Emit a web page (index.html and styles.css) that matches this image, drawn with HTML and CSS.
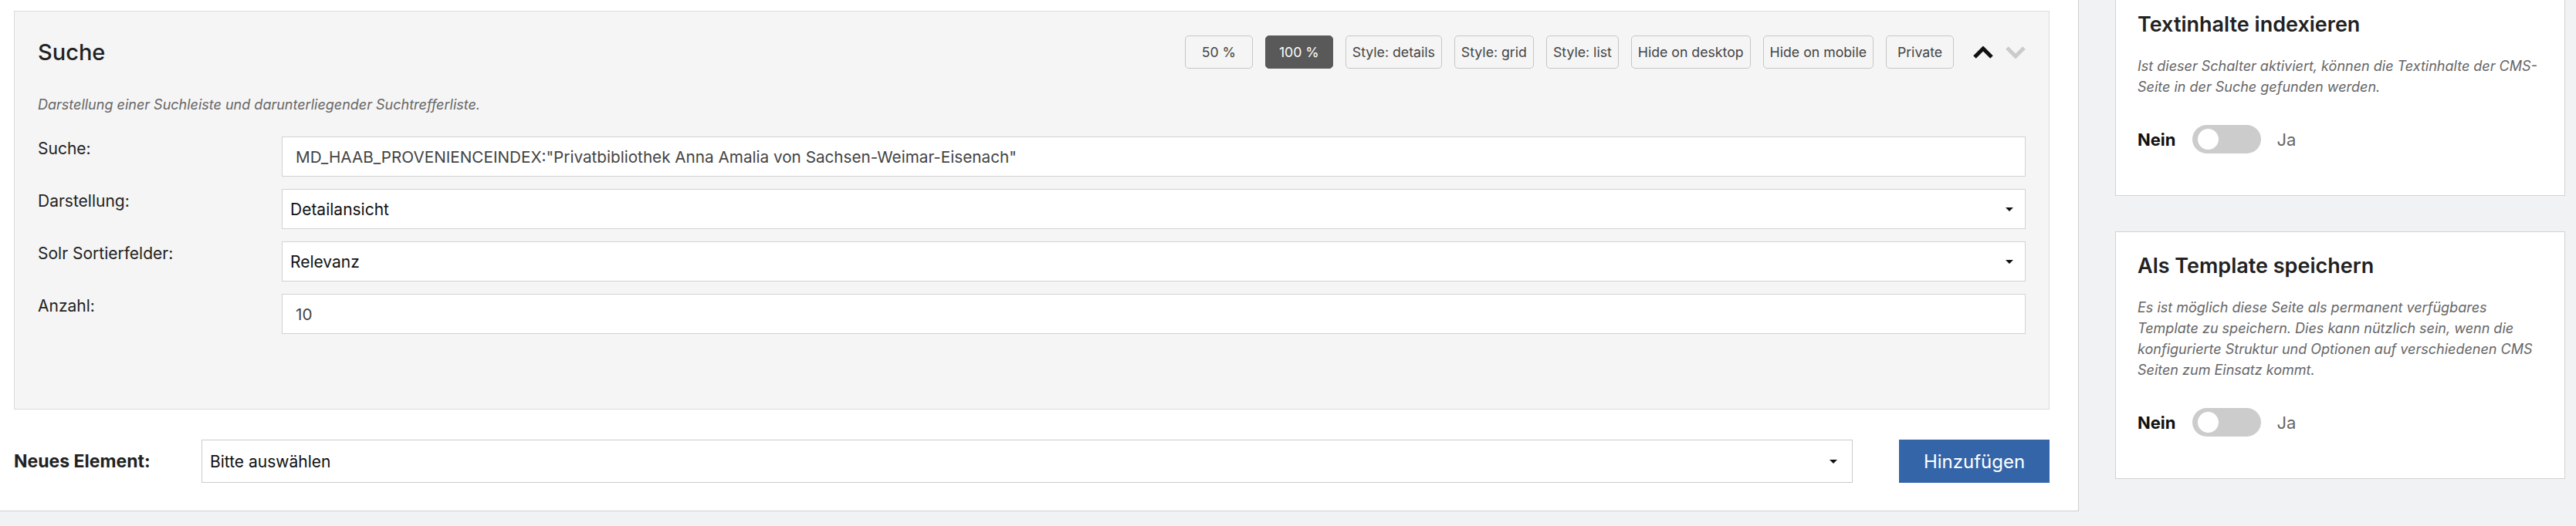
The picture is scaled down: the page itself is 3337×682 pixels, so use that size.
FILE: index.html
```html
<!DOCTYPE html>
<html lang="de">
<head>
    <meta charset="UTF-8">
    <title>CMS - Seite bearbeiten</title>
    <link rel="stylesheet" href="styles.css">
</head>
<body>
    <div class="page">
        <!-- Content editor -->
        <div class="editor">
            <div class="element">
                <div class="element-head">
                    <h2>Suche</h2>
                    <div class="element-tools">
                        <span class="tool">50 %</span>
                        <span class="tool active">100 %</span>
                        <span class="tool">Style: details</span>
                        <span class="tool">Style: grid</span>
                        <span class="tool">Style: list</span>
                        <span class="tool">Hide on desktop</span>
                        <span class="tool">Hide on mobile</span>
                        <span class="tool">Private</span>
                        <svg class="move up" viewBox="0 0 26 16"><polyline points="2,14 13,3 24,14"/></svg>
                        <svg class="move down" viewBox="0 0 26 16"><polyline points="2,2 13,13 24,2"/></svg>
                    </div>
                </div>
                <p class="element-desc">Darstellung einer Suchleiste und darunterliegender Suchtrefferliste.</p>

                <div class="element-form">
                    <label>Suche:</label>
                    <div class="field">MD_HAAB_PROVENIENCEINDEX:"Privatbibliothek Anna Amalia von Sachsen-Weimar-Eisenach"</div>

                    <label>Darstellung:</label>
                    <div class="field select">Detailansicht</div>

                    <label>Solr Sortierfelder:</label>
                    <div class="field select">Relevanz</div>

                    <label>Anzahl:</label>
                    <div class="field">10</div>
                </div>
            </div>

            <div class="new-element">
                <strong>Neues Element:</strong>
                <div class="field select">Bitte auswählen</div>
                <button type="button">Hinzufügen</button>
            </div>
        </div>

        <!-- Right sidebar -->
        <div class="sidebar">
            <div class="side-box">
                <h3>Textinhalte indexieren</h3>
                <p>Ist dieser Schalter aktiviert, können die Textinhalte der CMS-Seite in der Suche gefunden werden.</p>
                <div class="switch-row">
                    <strong>Nein</strong>
                    <span class="switch"></span>
                    <span class="yes">Ja</span>
                </div>
            </div>

            <div class="side-box">
                <h3>Als Template speichern</h3>
                <p>Es ist möglich diese Seite als permanent verfügbares Template zu speichern. Dies kann nützlich sein, wenn die konfigurierte Struktur und Optionen auf verschiedenen CMS Seiten zum Einsatz kommt.</p>
                <div class="switch-row">
                    <strong>Nein</strong>
                    <span class="switch"></span>
                    <span class="yes">Ja</span>
                </div>
            </div>
        </div>
    </div>
</body>
</html>
```
FILE: styles.css
```css
body {
    font-family: Inter, 'Noto Sans', sans-serif;
    margin: 0;
    background-color: #f1f2f4;
    color: #222;
}

.page {
    display: flex;
    align-items: flex-start;
    gap: 47px;
    padding-right: 14px;
}

.editor {
    flex: 0 0 2693px;
    box-sizing: border-box;
    background: #fff;
    border-right: 1px solid #cfcfcf;
    border-bottom: 1px solid #cfcfcf;
    padding: 14px 37px 36px 18px;
}

.element {
    background: #f5f5f5;
    border: 1px solid #dcdcdc;
    padding: 31px 30px 97px 30px;
}

.element-head {
    display: flex;
    align-items: center;
    justify-content: space-between;
    height: 43px;
}

.element-head h2 {
    margin: 0;
    font-size: 29px;
    font-weight: 500;
    color: #222;
}

.element-tools {
    display: flex;
    align-items: center;
    gap: 16px;
}

.tool {
    box-sizing: border-box;
    height: 43px;
    min-width: 88px;
    padding: 0 8px;
    display: flex;
    align-items: center;
    justify-content: center;
    border: 1px solid #c6c6c6;
    border-radius: 5px;
    font-size: 17.7px;
    color: #444;
}

.tool.active {
    background: #595959;
    border-color: #595959;
    color: #fff;
}

.move {
    width: 26px;
    height: 16px;
    fill: none;
    stroke-width: 5;
    stroke-linecap: butt;
    stroke-linejoin: miter;
}

.move.up {
    stroke: #111;
    margin-left: 9px;
}

.move.down {
    stroke: #cbcbcb;
}

.element-desc {
    margin: 35px 0 29px;
    font-size: 18px;
    line-height: 24px;
    font-style: italic;
    color: #666;
}

.element-form {
    display: grid;
    grid-template-columns: 316px 1fr;
    row-gap: 16px;
}

.element-form label {
    font-size: 21px;
    line-height: 26px;
    padding-top: 3px;
    color: #222;
}

.field {
    box-sizing: border-box;
    height: 52px;
    display: flex;
    align-items: center;
    padding: 0 17px;
    background: #fff;
    border: 1px solid #d2d2d2;
    font-size: 20.7px;
    color: #444;
}

.field.select {
    position: relative;
    padding-left: 10px;
    font-size: 21px;
    color: #111;
}

.field.select::after {
    content: "";
    position: absolute;
    right: 15px;
    top: 50%;
    margin-top: -2px;
    border-left: 5px solid transparent;
    border-right: 5px solid transparent;
    border-top: 5px solid #111;
}

.new-element {
    display: flex;
    align-items: center;
    margin-top: 39px;
}

.new-element strong {
    width: 243px;
    font-size: 23px;
    font-weight: 700;
    color: #222;
}

.new-element .field {
    flex: 1;
    height: 56px;
    border-color: #cbcbcb;
}

.new-element .field.select::after {
    right: 19px;
}

.new-element button {
    width: 195px;
    height: 56px;
    margin-left: 60px;
    border: none;
    background: #3465a8;
    color: #fff;
    font-family: inherit;
    font-size: 24px;
}

.sidebar {
    flex: 1;
    margin-top: -13px;
    display: flex;
    flex-direction: column;
    gap: 46px;
}

.side-box {
    background: #fff;
    border: 1px solid #d2d2d2;
    padding: 28px 28px 54px 28px;
}

.side-box h3 {
    margin: 0;
    font-size: 27px;
    line-height: 32px;
    font-weight: 600;
    color: #222;
}

.side-box p {
    margin: 24px 0 0;
    font-size: 18px;
    line-height: 27px;
    font-style: italic;
    color: #666;
}

.switch-row {
    display: flex;
    align-items: center;
    margin-top: 36px;
    font-size: 22px;
}

.switch-row strong {
    font-weight: 700;
    color: #111;
}

.switch {
    position: relative;
    width: 89px;
    height: 37px;
    margin: 0 21px;
    border-radius: 19px;
    background: #cccccc;
}

.switch::before {
    content: "";
    position: absolute;
    left: 7px;
    top: 5px;
    width: 27px;
    height: 27px;
    border-radius: 50%;
    background: #fff;
}

.yes {
    color: #666;
}
```
